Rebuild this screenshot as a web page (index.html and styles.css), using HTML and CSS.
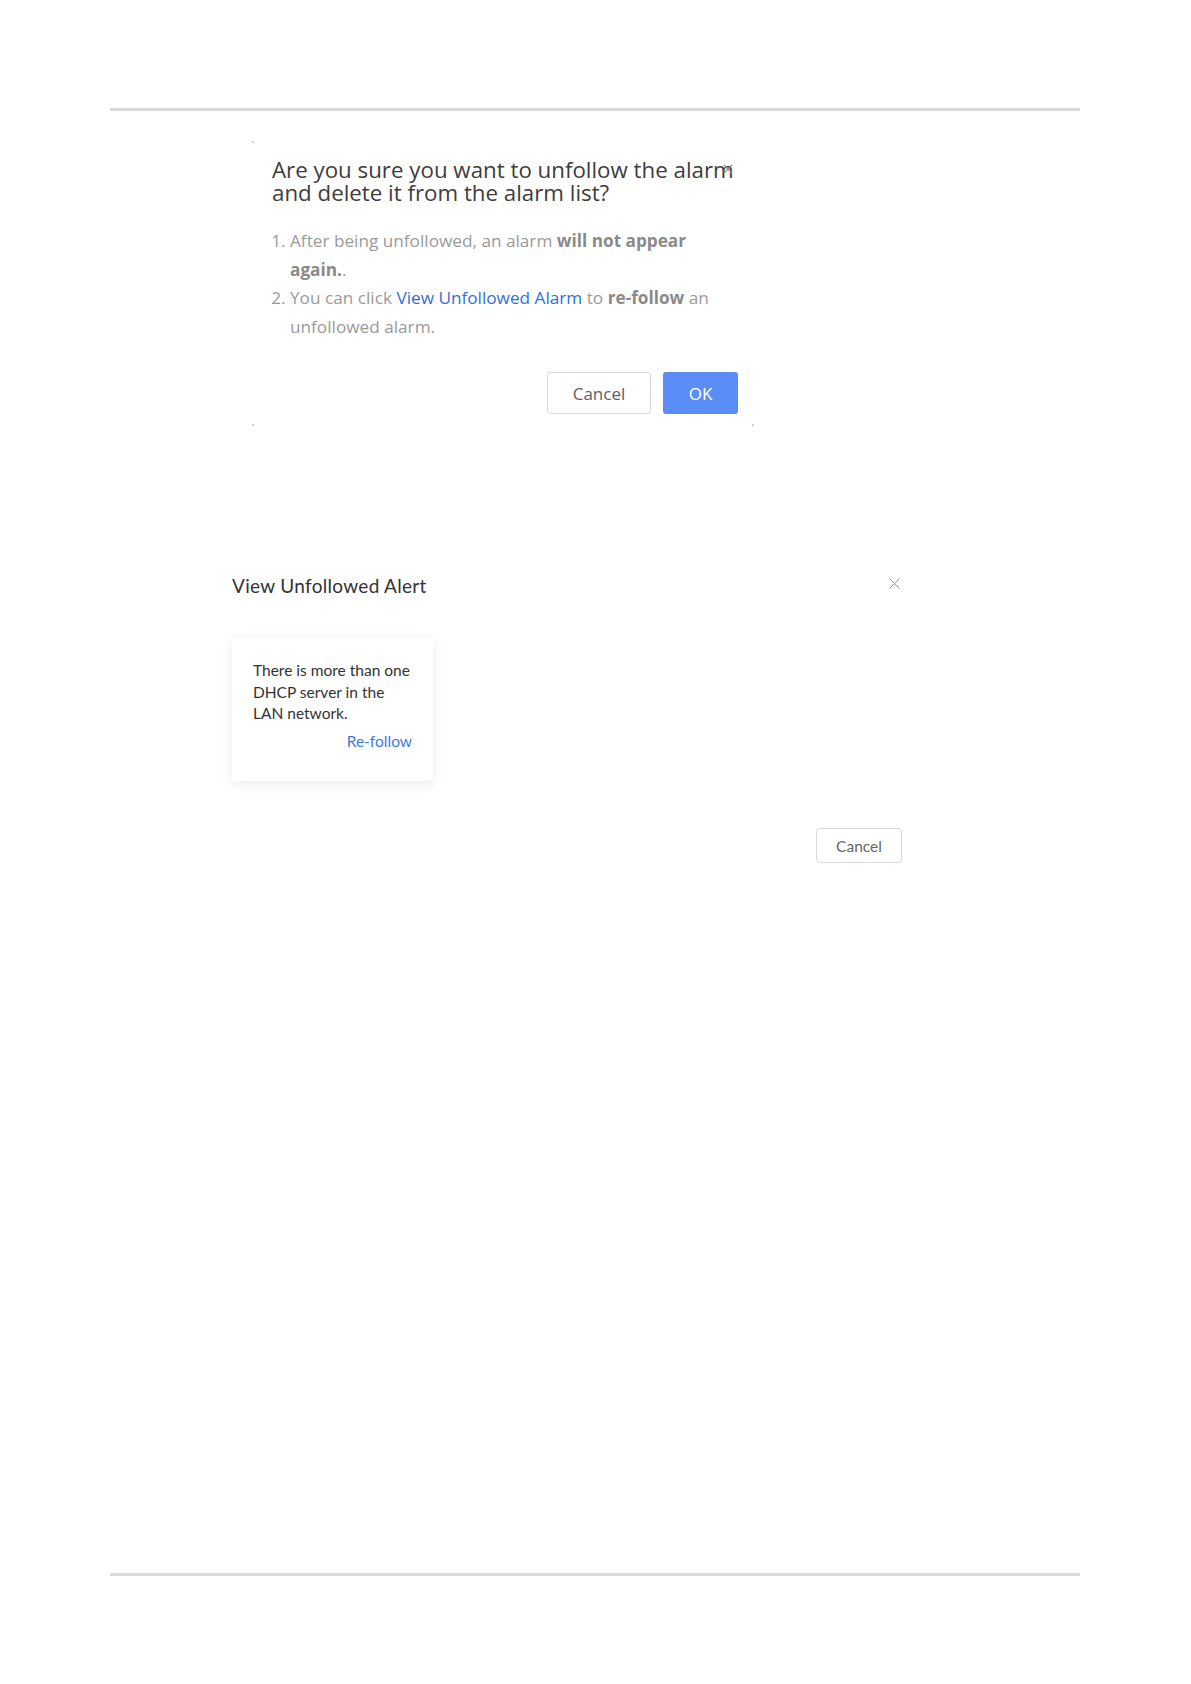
FILE: index.html
```html
<!DOCTYPE html>
<html lang="en">
<head>
  <meta charset="UTF-8">
  <title>Unfollow Alarm</title>
  <meta name="viewport" content="width=device-width, initial-scale=1.0">
  <link rel="stylesheet" href="styles.css">
</head>
<body>

<div class="sheet">
  <div class="rule"></div>

  <main class="content">

    <div class="confirm">
      <span class="mark mark-tl"></span>
      <span class="mark mark-bl"></span>
      <span class="mark mark-br"></span>
      <button class="close close-confirm" aria-label="Close">
        <svg width="10" height="10" viewBox="0 0 10 10"><path d="M1 1L9 9M9 1L1 9" stroke="#8c8c8c" stroke-width="1.2"/></svg>
      </button>

      <h1 class="confirm-title">Are you sure you want to unfollow the alarm and delete it from the alarm list?</h1>
      <ol class="confirm-list">
        <li>After being unfollowed, an alarm <b>will not appear again.</b>.</li>
        <li>You can click <a href="#">View Unfollowed Alarm</a> to <b>re-follow</b> an unfollowed alarm.</li>
      </ol>
      <div class="confirm-actions">
        <button class="btn btn-cancel">Cancel</button>
        <button class="btn btn-ok">OK</button>
      </div>
    </div>

    <div class="unfollowed">
      <div class="unfollowed-head">
        <h2 class="unfollowed-title">View Unfollowed Alert</h2>
        <button class="close" aria-label="Close">
          <svg width="11" height="11" viewBox="0 0 11 11"><path d="M0.5 0.5L10.5 10.5M10.5 0.5L0.5 10.5" stroke="#999" stroke-width="1"/></svg>
        </button>
      </div>

      <div class="alert-card">
        <p class="alert-text">There is more than one DHCP server in the LAN network.</p>
        <a href="#" class="alert-link">Re-follow</a>
      </div>

      <div class="unfollowed-actions">
        <button class="btn btn-small">Cancel</button>
      </div>
    </div>

  </main>

  <div class="rule"></div>
</div>

</body>
</html>
```

FILE: styles.css
```css
body {
  margin: 0;
  padding: 0;
  background: #ffffff;
  font-family: "Open Sans", "Liberation Sans", sans-serif;
}
.sheet {
  height: 1684px;
  box-sizing: border-box;
  padding: 108px 111px 108px 110px;
  display: flex;
  flex-direction: column;
}
.rule {
  height: 3px;
  background: #d9d9d9;
}
.content {
  flex: 1;
}
button {
  font-family: inherit;
  cursor: pointer;
}

/* confirm dialog */
.confirm {
  position: relative;
  width: 502px;
  box-sizing: border-box;
  margin: 30px 0 0 142px;
  padding: 17px 16px 12px 20px;
}
.mark {
  position: absolute;
  width: 2px;
  height: 2px;
  background: #cfcfcf;
}
.mark-tl { left: 0; top: 0; }
.mark-bl { left: 0; bottom: 0; }
.mark-br { right: 0; bottom: 0; }
.close {
  background: none;
  border: none;
  padding: 0;
  line-height: 0;
}
.close-confirm {
  position: absolute;
  top: 23px;
  right: 21px;
}
.confirm-title {
  margin: 0;
  font-size: 22.3px;
  line-height: 23px;
  font-weight: normal;
  color: #3d3d3d;
}
.confirm-list {
  margin: 23px 14px 0 0;
  padding-left: 18px;
  font-size: 17.2px;
  line-height: 28.5px;
  color: #9a9a9a;
}
.confirm-list b {
  color: #8a8a8a;
}
.confirm-list a {
  color: #2f6fdf;
  text-decoration: none;
}
.confirm-actions {
  display: flex;
  justify-content: flex-end;
  gap: 12px;
  margin-top: 31px;
}
.btn {
  border-radius: 3px;
  font-size: 17px;
}
.btn-cancel {
  width: 104px;
  height: 42px;
  background: #fff;
  border: 1px solid #d9d9d9;
  color: #606060;
}
.btn-ok {
  width: 75px;
  height: 42px;
  background: #5a8df6;
  border: none;
  color: #fff;
}

/* unfollowed alert dialog */
.unfollowed {
  width: 670px;
  margin: 148px 0 0 122px;
  font-family: "Lato", "Liberation Sans", sans-serif;
}
.unfollowed-head {
  display: flex;
  justify-content: space-between;
  align-items: flex-start;
}
.unfollowed-title {
  margin: 0;
  font-size: 19px;
  letter-spacing: 0.3px;
  line-height: 24px;
  font-weight: normal;
  color: #333;
}
.unfollowed-head .close {
  margin: 4px 2px 0 0;
}
.alert-card {
  width: 201px;
  height: 143px;
  box-sizing: border-box;
  margin-top: 40px;
  padding: 22px 21px 0 21px;
  background: #fff;
  box-shadow: 0 3px 12px rgba(0, 0, 0, 0.09);
  display: flex;
  flex-direction: column;
}
.alert-text {
  margin: 0;
  font-size: 15.5px;
  line-height: 21.5px;
  color: #333;
}
.alert-link {
  align-self: flex-end;
  margin-top: 6px;
  font-size: 15.5px;
  line-height: 21.5px;
  color: #3d79e0;
  text-decoration: none;
}
.unfollowed-actions {
  display: flex;
  justify-content: flex-end;
  margin-top: 47px;
}
.btn-small {
  width: 86px;
  height: 35px;
  background: #fff;
  border: 1px solid #d9d9d9;
  border-radius: 4px;
  font-family: "Lato", "Liberation Sans", sans-serif;
  font-size: 15.5px;
  color: #666;
}
```
